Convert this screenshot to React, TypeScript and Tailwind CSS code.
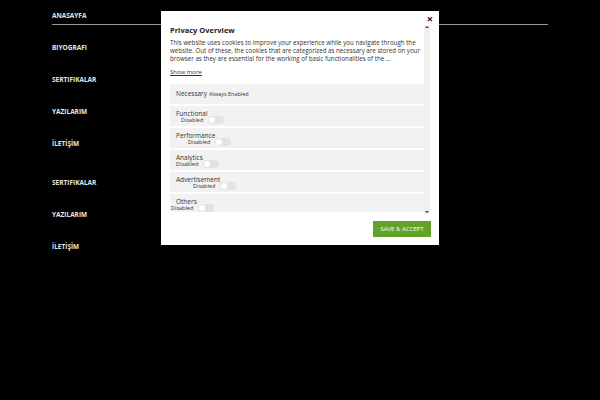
import React from 'react';

const navTop = ['BIYOGRAFI', 'SERTIFIKALAR', 'YAZILARIM', 'İLETİŞİM'];
const navBottom = ['SERTIFIKALAR', 'YAZILARIM', 'İLETİŞİM'];

// per-row indent of the "Disabled" switch line (matches the reference)
const categories = [
  { label: 'Functional', indent: 'ml-[5px]' },
  { label: 'Performance', indent: 'ml-[12px]' },
  { label: 'Analytics', indent: 'ml-[0px]' },
  { label: 'Advertisement', indent: 'ml-[17px]' },
  { label: 'Others', indent: '-ml-[5px]' },
];

function Toggle() {
  return (
    <span className="-my-[1px] ml-[5px] inline-flex h-[8px] w-[16px] items-center rounded-full bg-[#e3e3e3] pl-[1px]">
      <span className="h-[6px] w-[6px] rounded-full bg-white" />
    </span>
  );
}

function CategoryRow({ label, indent }: { label: string; indent: string }) {
  return (
    <div className="flex h-[20px] shrink-0 flex-col justify-center bg-[#f2f2f2] pl-[6px] pt-[1px]">
      <span className="text-[6.5px] leading-[6px] text-[#333]">{label}</span>
      <div className={`flex h-[6px] items-center ${indent}`}>
        <span className="text-[5.5px] leading-[6px] text-[#333]">Disabled</span>
        <Toggle />
      </div>
    </div>
  );
}

export default function App() {
  return (
    <div className="relative h-[400px] w-[600px] overflow-hidden bg-black font-['Open_Sans',sans-serif]">
      {/* Menu */}
      <nav className="flex flex-col pl-[52px] pt-[11px] text-[6.5px] font-bold text-[#e6e6e6]">
        <div className="w-[496px] border-b border-[#9a9a9a] pb-[3px] leading-[10px]">ANASAYFA</div>
        <div className="h-[18px]" />
        {navTop.map((item, i) => (
          <div key={item} className={`${i ? 'mt-[22px]' : ''} leading-[10px]`}>{item}</div>
        ))}
        <div className="h-[7px]" />
        {navBottom.map((item) => (
          <div key={item + '2'} className="mt-[22px] leading-[10px]">{item}</div>
        ))}
      </nav>

      {/* Cookie modal */}
      <div className="absolute left-[161px] top-[11px] flex h-[234px] w-[278px] flex-col bg-white">
        <div className="flex flex-1">
          <div className="flex w-[263px] flex-col pl-[9px] pt-[14px]">
            <div className="text-[7.5px] font-bold leading-[10px] text-[#222]">Privacy Overview</div>
            <p className="mt-[4px] text-[6.2px] leading-[8px] text-[#333]">
              This website uses cookies to improve your experience while you navigate through the website. Out of these, the cookies that are categorized as necessary are stored on your browser as they are essential for the working of basic functionalities of the ...
            </p>
            <a className="mt-[5px] text-[6px] leading-[8px] text-[#333] underline">Show more</a>
            <div className="mt-[8px] flex h-[128px] flex-col gap-[2px] overflow-hidden">
              <div className="flex h-[20px] shrink-0 items-center bg-[#f2f2f2] pl-[6px]">
                <span className="text-[6.5px] text-[#333]">Necessary</span>
                <span className="ml-[2px] text-[5.5px] text-[#333]">Always Enabled</span>
              </div>
              {categories.map((c) => (
                <CategoryRow key={c.label} label={c.label} indent={c.indent} />
              ))}
            </div>
          </div>
          {/* scrollbar */}
          <div className="ml-[0px] mt-[14px] flex h-[189px] w-[6px] flex-col items-center justify-between bg-[#efefef]">
            <span className="mt-[1px] h-0 w-0 border-x-[2px] border-b-[2px] border-x-transparent border-b-[#444]" />
            <span className="mb-[1px] h-0 w-0 border-x-[2px] border-t-[2px] border-x-transparent border-t-[#444]" />
          </div>
          <span className="absolute right-[6px] top-[3px] text-[11px] font-bold leading-[10px] text-[#111]">×</span>
        </div>
        <div className="flex justify-end pb-[8px] pr-[8px]">
          <button className="h-[16px] w-[58px] bg-[#61a229] text-[6px] uppercase text-white">Save &amp; Accept</button>
        </div>
      </div>
    </div>
  );
}
